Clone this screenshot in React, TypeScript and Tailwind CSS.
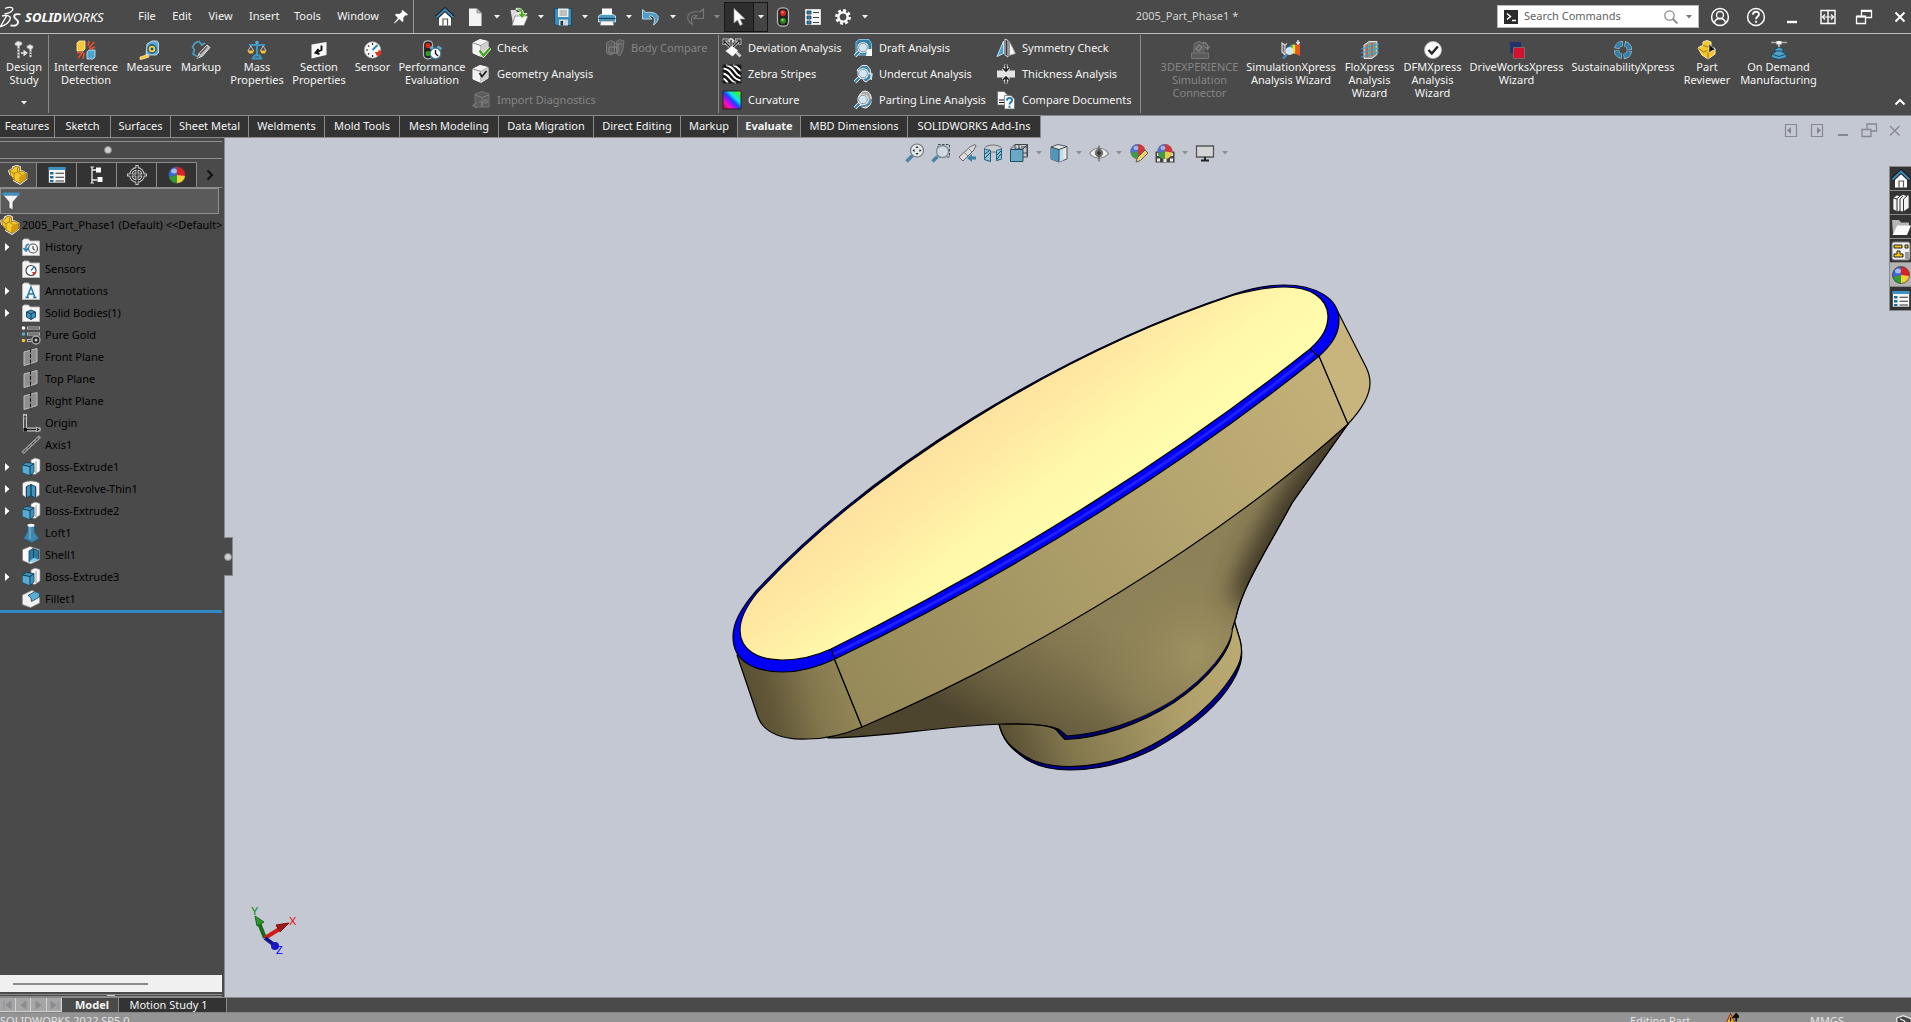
import React from 'react';

interface IconProps {
    children: React.ReactNode;
    className?: string;
}

function Icon({ children, className = 'w-5 h-5' }: IconProps) {
    return (
        <svg viewBox="0 0 20 20" className={`${className} shrink-0`} fill="none" aria-hidden="true">
            {children}
        </svg>
    );
}

function Caret({ className = 'text-[#f0f0f0]' }: { className?: string }) {
    return (
        <svg viewBox="0 0 6 4" className={`w-[6px] h-1 shrink-0 ${className}`} aria-hidden="true">
            <path d="M0 0h6L3 3.5z" fill="currentColor" />
        </svg>
    );
}

/* ---------- shared drawings ---------- */

const goldPart = (
    <Icon>
        <path d="M1 6l4-2.500V2l4-1.500L12 2v5l2-1 4.500 2.500V14L12 19l-6-3.500V13l-4-4z" fill="#f3c623" stroke="#fff" strokeWidth="1.600" />
        <path d="M1.500 5.500L5 4l1-2 3-1 2.500 1.500V7L14 6l4.500 2.500V14L12 18.500 6 15l-3.500-5z" fill="#f6c829" stroke="#8a6410" strokeWidth=".8" />
        <path d="M2 6l4 2.500V15M6 8.500L9.500 7V3l2-1M9.500 7l4.500 3.500L18 9M12 18.500v-7" stroke="#8a6410" strokeWidth=".7" />
        <path d="M12 12l6-3v5l-6 4z" fill="#d69a12" />
    </Icon>
);

const house = (
    <Icon>
        <path d="M4 9v9.500h12V9l-6-6z" fill="#fff" />
        <path d="M8 18.500V12h4.500v6.500" stroke="#555" strokeWidth="1.200" />
        <path d="M1.500 10.500L10 2.500l8.500 8" stroke="#111" strokeWidth="3.800" />
        <path d="M1.500 10.500L10 2.500l8.500 8" stroke="#3d87b5" strokeWidth="2.200" />
    </Icon>
);

const ball = (
    <Icon>
        <circle cx="10" cy="10" r="8.500" fill="#d22" />
        <path d="M10 1.500a8.500 8.500 0 0 0-8.200 10.800L10 10z" fill="#3568d8" />
        <path d="M1.800 12.300A8.500 8.500 0 0 0 10 18.500V10z" fill="#2f9c3a" />
        <path d="M10 18.500a8.500 8.500 0 0 0 8.400-7.500L10 10z" fill="#f1d23a" />
        <ellipse cx="7" cy="6" rx="3" ry="2.500" fill="#fff" opacity=".55" />
        <circle cx="10" cy="10" r="8.500" stroke="#333" strokeWidth=".6" />
    </Icon>
);

const listSheet = (
    <Icon>
        <path d="M2.500 2.500h15v15h-15z" fill="#f4f4f4" stroke="#ddd" />
        <path d="M4 4h4v3H4zM4 9h4v3H4zM4 14h4v3H4z" fill="#2f86ae" stroke="#153d52" strokeWidth=".8" />
        <path d="M10 5.500h6M10 10.500h6M10 15.500h6" stroke="#444" strokeWidth="1.200" />
    </Icon>
);

const listPanel = (
    <Icon>
        <path d="M1.500 2.500h17v15.500h-17z" fill="#f6f6f6" stroke="#222" strokeWidth=".6" />
        <path d="M1.500 2h17v3h-17z" fill="#3d92bf" />
        <path d="M3 7h3.500v2.500H3zM3 11h3.500v2.500H3zM3 15h3.500v2H3z" fill="#1f6f96" />
        <path d="M8.500 8.300H17M8.500 12.300H17M8.500 16H17" stroke="#333" strokeWidth="1.100" />
    </Icon>
);

const whiteCube = (
    <>
        <path d="M2 5l7-3.500 8 2V14l-7 4.500L2 15z" fill="#f2f2f2" stroke="#fff" strokeWidth="1" />
        <path d="M2 5l8 2.500 7-4M10 7.500v11" stroke="#777" strokeWidth=".9" />
        <path d="M10 7.500l7-4V14l-7 4.500z" fill="#cfcfcf" />
    </>
);

const lens = (
    <>
        <path d="M2 18l5-5" stroke="#fff" strokeWidth="3.500" />
        <path d="M2 18l5-5" stroke="#2c7ba6" strokeWidth="2" />
        <circle cx="10" cy="9.500" r="4.500" fill="#cfe6f3" stroke="#f5f5f5" strokeWidth="2.200" />
        <circle cx="10" cy="9.500" r="4.300" stroke="#56707f" strokeWidth=".8" />
    </>
);

/* ---------- title bar ---------- */

function Logo() {
    return (
        <div className="flex items-center gap-[3px] w-[112px] shrink-0 text-white">
            <svg viewBox="0 0 22 22" className="w-[22px] h-[22px] shrink-0" fill="none" stroke="#fff" aria-hidden="true">
                <path d="M5 2.500C9 .5 14 1 12.500 4 11.500 6 8 7.500 4.500 8" strokeWidth="1.300" />
                <path d="M2 10c5-1.200 9.500-.5 8 3.500-1.300 3.500-5 5.800-9.500 7L6.500 10" strokeWidth="1.300" />
                <path d="M20.500 8.500c-3.500-1-7-.2-6.200 2.500.7 2.300 4.400 3 3.700 5.700-.6 2.300-4 3.300-7.500 2.800" strokeWidth="1.800" />
            </svg>
            <span className="text-[13px] leading-4 italic"><b>SOLID</b>WORKS</span>
        </div>
    );
}

const MENUS = [
    { label: 'File', width: 'w-[18px]' },
    { label: 'Edit', width: 'w-5' },
    { label: 'View', width: 'w-[25px]' },
    { label: 'Insert', width: 'w-[29px]' },
    { label: 'Tools', width: 'w-[26px]' },
    { label: 'Window', width: 'w-[44px]' },
];

const QUICK = [
    {
        label: 'New',
        icon: (
            <Icon>
                <path d="M4 1.500h8l4.500 4.500v13H4z" fill="#f3f3f3" />
                <path d="M12 1.500V6h4.500z" fill="#bdbdbd" stroke="#777" strokeWidth=".6" />
            </Icon>
        ),
    },
    {
        label: 'Open',
        icon: (
            <Icon>
                <path d="M1.500 3h5l1.500 2h6v12h-10z" fill="#ddd" />
                <path d="M3 18.500L6 9h13l-4 9.500z" fill="#f7f7f7" stroke="#777" strokeWidth=".7" />
                <path d="M7 1.500c5-1 7.500 1.500 7.500 5H18l-5 5-4.500-5h3C11.500 4 10 2.500 7 2.500z" fill="#4fae1c" stroke="#fff" strokeWidth=".8" />
            </Icon>
        ),
    },
    {
        label: 'Save',
        icon: (
            <Icon>
                <path d="M1.500 1.500h17v17h-15l-2-2z" fill="#3a8dbb" stroke="#173f55" strokeWidth=".8" />
                <path d="M5 1.500h10.500V10H5z" fill="#eee" />
                <path d="M6.500 4H14M6.500 6H14M6.500 8H14" stroke="#777" strokeWidth=".8" />
                <path d="M6 12.500h9v6H6z" fill="#cfd6da" />
                <path d="M7.500 14h2.500v4.500H7.500z" fill="#234" />
            </Icon>
        ),
    },
    {
        label: 'Print',
        icon: (
            <Icon>
                <path d="M5 1.500h10v7H5z" fill="#fff" />
                <path d="M1.500 9L4 7.500h12L18.500 9v6h-17z" fill="#4d9cc6" stroke="#e6f2f9" strokeWidth=".8" />
                <path d="M1.500 11.500h17" stroke="#163f55" strokeWidth="1.200" />
                <path d="M4 14h12l1 4.500H3z" fill="#f7f7f7" stroke="#666" strokeWidth=".6" />
            </Icon>
        ),
    },
    {
        label: 'Undo',
        icon: (
            <Icon>
                <path d="M1.500 2.500v9.500h9.500L8 9c4.500-1 7 2 4.500 9C20 13 19.500 4 5 5.500z" fill="#4e9cc5" stroke="#b9d7e6" strokeWidth="1" />
            </Icon>
        ),
    },
    {
        label: 'Redo',
        disabled: true,
        icon: (
            <Icon>
                <path d="M18.500 2v9.500H9L12 8.500c-4.500-1-7 2-4.500 9C0 12.500.5 3.500 15 5z" stroke="#777" strokeWidth="1.100" />
            </Icon>
        ),
    },
];

function TitleBar() {
    return (
        <header className="flex items-center h-[33px] shrink-0">
            <Logo />
            <nav className="flex items-center gap-4 pl-[26px] text-[11px]" aria-label="Menu">
                {MENUS.map(m => (
                    <button key={m.label} className={`${m.width} whitespace-nowrap`}>{m.label}</button>
                ))}
            </nav>
            <button className="ml-[14px]" aria-label="Pin menu">
                <svg viewBox="0 0 14 14" className="w-[14px] h-[14px]" aria-hidden="true">
                    <path d="M8.500 0L14 4.500l-1 1-1.500-.3-2.300 2.600.3 3.200-1.200 1L5.300 9 .5 13.500 0 13l4-5L1 5l1-1.200 3.300.2L8 2 7.600.8z" fill="#fff" />
                </svg>
            </button>
            <div className="w-px h-[33px] ml-[5px] mr-[21px] bg-[#9a9a9a]" />
            <button className="mr-[10px]" aria-label="Home">{house}</button>
            {QUICK.map(q => (
                <div key={q.label} className="flex items-center">
                    <button aria-label={q.label} disabled={q.disabled}>{q.icon}</button>
                    <button aria-label={`${q.label} options`} className="flex justify-center w-6">
                        <Caret className={q.disabled ? 'text-[#8a8a8a]' : 'text-[#f0f0f0]'} />
                    </button>
                </div>
            ))}
            <div className="flex h-[30px] -ml-[5px] mr-[5px] border border-[#161616] bg-[#2e2e2e]">
                <button aria-label="Select" className="flex items-center justify-center w-[29px] border-r border-[#161616]">
                    <Icon>
                        <path d="M5 1.500v14.500l3.500-3 2.500 5.500 2.500-1.200L11 12h5z" fill="#fff" stroke="#999" strokeWidth=".7" />
                    </Icon>
                </button>
                <button aria-label="Select options" className="flex items-center justify-center w-[13px] bg-[#444]"><Caret /></button>
            </div>
            <button className="mr-[10px]" aria-label="Rebuild">
                <Icon>
                    <rect x="4.500" y=".8" width="11" height="18.400" rx="4.500" fill="#222" stroke="#b9b9b9" strokeWidth="1.300" />
                    <circle cx="10" cy="6" r="3" fill="#d8281c" />
                    <circle cx="9.500" cy="5.200" r="1" fill="#ff9d8c" />
                    <circle cx="10" cy="13.800" r="3" fill="#2f8a1d" />
                    <circle cx="9.500" cy="13" r="1" fill="#9be07f" />
                </Icon>
            </button>
            <button className="mr-[10px]" aria-label="File properties">{listSheet}</button>
            <button aria-label="Options">
                <Icon>
                    <circle cx="10" cy="10" r="6.600" stroke="#fff" strokeWidth="2.600" strokeDasharray="2.900 2.280" />
                    <circle cx="10" cy="10" r="4.600" stroke="#fff" strokeWidth="2.400" />
                </Icon>
            </button>
            <button aria-label="Options menu" className="flex justify-center w-6"><Caret /></button>

            <h1 className="flex-1 text-center text-[11px] text-[#d4d4d4] whitespace-nowrap">2005_Part_Phase1 *</h1>

            <label className="flex items-center w-[202px] h-[23px] px-1.5 bg-white border border-[#bbb]">
                <svg viewBox="0 0 14 14" className="w-[14px] h-[14px] shrink-0" aria-hidden="true">
                    <path d="M0 0h14v14H0z" fill="#2a2a2a" />
                    <path d="M3 3.500L6.500 6.500 3 9.500M8 10.500h4" stroke="#fff" strokeWidth="1.500" fill="none" />
                </svg>
                <input
                    type="text"
                    aria-label="Search Commands"
                    placeholder="Search Commands"
                    className="flex-1 min-w-0 ml-[6px] text-[11px] text-[#333] outline-none placeholder:text-[#5f5f5f]"
                />
                <svg viewBox="0 0 14 14" className="w-[14px] h-[14px] shrink-0 mr-2" fill="none" stroke="#888" aria-hidden="true">
                    <circle cx="5.500" cy="5.500" r="4.700" strokeWidth="1.200" />
                    <path d="M9 9l4.500 4.500" strokeWidth="1.800" />
                </svg>
                <Caret className="text-[#777]" />
            </label>
            <div className="flex items-center gap-4 ml-[11px] pr-[1px]">
                <button aria-label="Account">
                    <Icon>
                        <circle cx="10" cy="10" r="8.400" stroke="#fff" strokeWidth="1.500" />
                        <circle cx="10" cy="8" r="3.500" stroke="#fff" strokeWidth="1.300" />
                        <path d="M4.500 16c.5-3.500 3-4.500 5.500-4.500s5 1 5.500 4.500" stroke="#fff" strokeWidth="1.300" />
                    </Icon>
                </button>
                <button aria-label="Help">
                    <Icon>
                        <circle cx="10" cy="10" r="8.400" stroke="#fff" strokeWidth="1.500" />
                        <path d="M7 7.800c0-4 6-4 6-.5 0 2.300-3 2.200-3 5M10 13.800v2" stroke="#fff" strokeWidth="1.800" />
                    </Icon>
                </button>
                <button aria-label="Minimize"><Icon><path d="M5 15h10" stroke="#fff" strokeWidth="2.400" /></Icon></button>
                <button aria-label="Span displays">
                    <Icon>
                        <path d="M3 3.500h14v13H3zM10 3.500v13" stroke="#fff" strokeWidth="1.400" />
                        <path d="M4.500 10h11M7 7.500L4.500 10 7 12.500M13 7.500l2.500 2.500-2.500 2.500" stroke="#fff" strokeWidth="1.200" />
                    </Icon>
                </button>
                <button aria-label="Restore">
                    <Icon><path d="M2.500 9.500h9v7h-9zM7.500 9V3.500h10v7h-5.500" stroke="#fff" strokeWidth="1.300" /><path d="M2.500 9.500h9M7.500 4h10" stroke="#fff" strokeWidth="2" /></Icon>
                </button>
                <button aria-label="Close"><Icon><path d="M5.500 5.500l9 9M14.500 5.500l-9 9" stroke="#fff" strokeWidth="1.900" /></Icon></button>
            </div>
        </header>
    );
}

/* ---------- ribbon ---------- */

interface BigTool {
    lines: string[];
    width: string;
    disabled?: boolean;
    icon: React.ReactNode;
}

const ANALYSIS: BigTool[] = [
    {
        lines: ['Interference', 'Detection'],
        width: 'w-[62px]',
        icon: (
            <Icon>
                <path d="M1 3l2-2h6v8l-2 2H1z" fill="#f5c93a" stroke="#fff0b0" strokeWidth=".8" />
                <path d="M11 12l2-2h6v7l-2 2h-6z" fill="#4ba3cf" stroke="#cfe8f4" strokeWidth=".8" />
                <path d="M12 6l1-5M13 8l5-6M14 9l5-2M8 13l-1 6M7 12l-5 6M6 12l-5 1" stroke="#f0502c" strokeWidth="1.500" />
            </Icon>
        ),
    },
    {
        lines: ['Measure'],
        width: 'w-11',
        icon: (
            <Icon>
                <path d="M8 4l5-3h5l1.500 2v10L17 15H7z" fill="#58a9d1" stroke="#e0eef5" strokeWidth=".8" />
                <circle cx="13" cy="9" r="4" fill="#f4d04a" stroke="#17506c" strokeWidth="1.300" />
                <circle cx="13" cy="9" r="1.400" fill="#17506c" />
                <path d="M1 17l8-2.500 1 2.500-6 2-3 .5z" fill="#f4c835" stroke="#fff2b5" strokeWidth=".7" />
            </Icon>
        ),
    },
    {
        lines: ['Markup'],
        width: 'w-10',
        icon: (
            <Icon>
                <path d="M14 3L11 5 8 1.500 4 3 1.500 7 3.500 10 2 14l4 2.500" stroke="#4c9dc4" strokeWidth="1.700" />
                <path d="M6 18.500l2-5L16 5l3 2.500-7.500 8.500z" fill="#b8b8b8" stroke="#eee" strokeWidth=".9" />
                <path d="M9 14l7-7.500M6 18.500l2.500-3" stroke="#555" strokeWidth="1.100" />
            </Icon>
        ),
    },
    {
        lines: ['Mass', 'Properties'],
        width: 'w-[52px]',
        icon: (
            <Icon>
                <path d="M10 1.500V15M6 18.500l1.500-3h5l1.500 3zM2 5h16" stroke="#3e96c2" strokeWidth="2.200" />
                <path d="M.8 11l3-5 3 5M13.200 11l3-5 3 5" stroke="#d0d0d0" strokeWidth=".9" />
                <path d="M.5 10.500h6.500l-1.500 3h-3.500zM13 10.500h6.500l-1.500 3h-3.500z" fill="#f2bf35" />
                <circle cx="10" cy="2.500" r="1.800" fill="#55abd5" />
            </Icon>
        ),
    },
    {
        lines: ['Section', 'Properties'],
        width: 'w-[52px]',
        icon: (
            <Icon>
                <path d="M2.500 4.500L17.500 2v13L2.500 18.500z" fill="#f7f7f7" />
                <path d="M12.500 5.500V10L7 12.500M9.500 9L6.500 12.700l4 1.300" stroke="#111" strokeWidth="1.900" />
            </Icon>
        ),
    },
    {
        lines: ['Sensor'],
        width: 'w-[35px]',
        icon: (
            <Icon>
                <circle cx="9.500" cy="10" r="8.300" fill="#fafafa" stroke="#999" strokeWidth=".7" />
                <path d="M9.500 3v2M3 10h2M5 5.500l1.200 1.200M5 14.500l1.200-1.200M9.500 17v-2M14 5.500L13 6.700" stroke="#222" strokeWidth="1.200" />
                <path d="M9.500 10l5-5" stroke="#2c86b2" strokeWidth="1.900" />
                <path d="M12 12h3l1-2.500 2.500 2.500-2 4.500-3-1z" fill="#e03522" />
            </Icon>
        ),
    },
    {
        lines: ['Performance', 'Evaluation'],
        width: 'w-16',
        icon: (
            <Icon>
                <rect x="1.500" y=".8" width="9" height="18" rx="4" fill="#222" stroke="#b9b9b9" strokeWidth="1.200" />
                <circle cx="6" cy="5.500" r="2.600" fill="#d8281c" />
                <circle cx="6" cy="13.500" r="2.600" fill="#2f9a1d" />
                <path d="M8 8.500l3-2M19.500 9l-4-2.500" stroke="#64b1d6" strokeWidth="2.400" />
                <circle cx="13.500" cy="13.500" r="5.300" fill="#fff" stroke="#3d7f9f" strokeWidth="1.200" />
                <path d="M13.500 10v3.500l2.500 2.500" stroke="#111" strokeWidth="1.400" />
            </Icon>
        ),
    },
];

const XPRESS: BigTool[] = [
    {
        lines: ['3DEXPERIENCE', 'Simulation', 'Connector'],
        width: 'w-[75px]',
        disabled: true,
        icon: (
            <Icon>
                <path d="M1.500 13h17v5.500h-17zM4 13V4l5-2.500 5 2V13" fill="#5b5b5b" stroke="#777" />
                <path d="M6 9l3-4 3 2-3 4zM13 2.500c4 0 5 3 4.500 6M15 6.500l2.500 3L19.500 6" stroke="#808080" strokeWidth="1.300" />
            </Icon>
        ),
    },
    {
        lines: ['SimulationXpress', 'Analysis Wizard'],
        width: 'w-[88px]',
        icon: (
            <Icon>
                <path d="M1 3l3 2v10l-3-3zM3.500 5.500l2.500-2" fill="#777" stroke="#ddd" strokeWidth="1.100" />
                <path d="M5 8C8 6 9 4 12 4.500s5 .5 7-.5v12c-2-2-4-2.500-6-2.500s-5 1-8 1z" fill="#2a58e0" />
                <path d="M9 5.500L11.500 4.500v9L9 14z" fill="#20c04a" />
                <path d="M11.500 4.500l3 .3v9l-3-.3z" fill="#f4e31f" />
                <path d="M14.500 4.800L19 4v12l-4.500-2.200z" fill="#ee5a1c" />
                <path d="M17 0v4M15.500 2L17 4l1.800-2" stroke="#eee" strokeWidth="1.300" />
                <circle cx="8.500" cy="11" r="3.500" fill="#cfe6f3" stroke="#eee" strokeWidth="1" />
                <path d="M2 18.500l4-4" stroke="#3c92bf" strokeWidth="2.200" />
            </Icon>
        ),
    },
    {
        lines: ['FloXpress', 'Analysis', 'Wizard'],
        width: 'w-[49px]',
        icon: (
            <Icon>
                <path d="M4 5l5-3.500h8v13l-5 4H4z" fill="#9b9b9b" stroke="#eee" strokeWidth=".9" />
                <path d="M7 5v12M12 3v13" stroke="#d84a3a" strokeWidth="1.600" />
                <path d="M9.500 4v13M14.500 3v12" stroke="#45b56a" strokeWidth="1.400" />
                <path d="M1 9l18-5M1 13l18-5M1 17l18-5" stroke="#3a9bd0" strokeWidth="1.100" />
            </Icon>
        ),
    },
    {
        lines: ['DFMXpress', 'Analysis', 'Wizard'],
        width: 'w-[57px]',
        icon: (
            <Icon>
                <circle cx="10" cy="10" r="8.500" fill="#fafafa" stroke="#bbb" strokeWidth=".8" />
                <path d="M5.500 10l3.300 3.500 6-7" stroke="#222" strokeWidth="2.400" />
            </Icon>
        ),
    },
    {
        lines: ['DriveWorksXpress', 'Wizard'],
        width: 'w-[91px]',
        icon: (
            <Icon>
                <path d="M3 2h11v11H3z" fill="#22306c" />
                <path d="M6.500 7.500h11v11h-11z" fill="#d3122e" stroke="#777" strokeWidth=".8" />
            </Icon>
        ),
    },
    {
        lines: ['SustainabilityXpress'],
        width: 'w-[102px]',
        icon: (
            <Icon>
                <circle cx="10" cy="10" r="6.500" stroke="#9dbccb" strokeWidth="5.400" strokeDasharray="8.400 1.810" strokeDashoffset="-.9" />
                <circle cx="10" cy="10" r="6.500" stroke="#2f7fa6" strokeWidth="4" strokeDasharray="7 3.210" strokeDashoffset="-1.600" />
            </Icon>
        ),
    },
    {
        lines: ['Part', 'Reviewer'],
        width: 'w-[46px]',
        icon: (
            <Icon>
                <path d="M1 8l5-3V2l4-1.500L14 2v5l4 1.500V14l-7 5-6-4z" fill="#f5c62b" stroke="#fff0b5" strokeWidth="1" />
                <path d="M1.500 8.500l5 3.500 4-1.500M6 5l4 2 4-2M11 12v7" stroke="#8a6410" strokeWidth=".8" />
                <path d="M12 4v9l2.300-2 4-1.500z" fill="#111" stroke="#ddd" strokeWidth=".7" />
            </Icon>
        ),
    },
    {
        lines: ['On Demand', 'Manufacturing'],
        width: 'w-[77px]',
        icon: (
            <Icon>
                <path d="M2 2.500h16" stroke="#aaa" strokeWidth="1.500" />
                <path d="M7.500 1h5v3.500h-5z" fill="#f4f4f4" />
                <path d="M10 4.500V8" stroke="#ddd" strokeWidth="1.500" />
                <path d="M2.500 14l4-2-1-2.500 4.500-2.300L14.500 9l-1 3 4 2v3.500L10 19.500l-7.500-2z" fill="#4ca2cb" stroke="#173f55" strokeWidth=".8" />
                <path d="M2.500 14l7.500 2.500 7.500-2.500M6 11h7.500" stroke="#173f55" strokeWidth=".9" />
            </Icon>
        ),
    },
];

interface SmallTool {
    label: string;
    disabled?: boolean;
    icon: React.ReactNode;
}

const CHECKS: SmallTool[] = [
    {
        label: 'Check',
        icon: <Icon>{whiteCube}<path d="M8.500 12.500l4 5L19 10" stroke="#fff" strokeWidth="3.600" /><path d="M8.500 12.500l4 5L19 10" stroke="#3da516" strokeWidth="2.300" /></Icon>,
    },
    {
        label: 'Geometry Analysis',
        icon: <Icon>{whiteCube}<path d="M8.500 9l2.500 3.500 4.500-5.500" stroke="#222" strokeWidth="1.900" /></Icon>,
    },
    {
        label: 'Import Diagnostics',
        disabled: true,
        icon: (
            <Icon>
                <path d="M4 4l7-2.500 7 2.500v13H4z" fill="#5c5c5c" stroke="#757575" />
                <path d="M4 5l7 2.500L18 5M11 8v9M8 12h3v4M13 10h3v3h-3zM6 13l-4.500 2.500L6 18" stroke="#808080" />
            </Icon>
        ),
    },
];

const BODY_COMPARE: SmallTool[] = [
    {
        label: 'Body Compare',
        disabled: true,
        icon: (
            <Icon>
                <path d="M1.500 5l4-2.500 4 1.500v11l-4 2-4-2zM11 4l4-2.500 4 1.500-1 8-3 7-3-2z" fill="#5c5c5c" stroke="#777" />
                <path d="M4 9h8v6H4zM11 6h6M13 6v8" stroke="#858585" />
            </Icon>
        ),
    },
];

const SURFACE: SmallTool[] = [
    {
        label: 'Deviation Analysis',
        icon: (
            <Icon>
                <path d="M9 10L2 3M2 7V2h5M9 8V2M7 4l2-3 3 3M10 10l7-7M13 2h5v5M14 14l4.500 4.500" stroke="#d0d0d0" strokeWidth="2.800" />
                <path d="M9 10L2 3M2 6.500V2h4.500M9 8V2M10 10l7-7M13.500 2H18v4.500" stroke="#222" strokeWidth="1.200" />
                <path d="M3.500 13l6.500-5 6 4.500-5.500 6z" fill="#fafafa" />
            </Icon>
        ),
    },
    {
        label: 'Zebra Stripes',
        icon: (
            <Icon>
                <path d="M1 1h18v18H1z" fill="#111" />
                <path d="M1 4.500c5 .5 6.500 2.500 9 6s4.500 5.500 9 6M4 1c5 1.500 7 3 9 6.500s3 4 6 5M1 9.500c3.500.5 5 2.500 7 5s3 3.500 6 4.500M11 1c4 1.500 6 4 8 6M1 14.500c2 .5 3.500 2.500 5 4.500" stroke="#fff" strokeWidth="1.900" />
                <path d="M1 1h18v18H1z" stroke="#222" strokeWidth="1" />
            </Icon>
        ),
    },
    {
        label: 'Curvature',
        icon: (
            <Icon>
                <defs>
                    <linearGradient id="curv" x1="0" y1="1" x2="1" y2="0">
                        <stop offset="0" stopColor="#a01010" />
                        <stop offset=".22" stopColor="#ff10b0" />
                        <stop offset=".38" stopColor="#a010ff" />
                        <stop offset=".5" stopColor="#1048ff" />
                        <stop offset=".65" stopColor="#10e8f0" />
                        <stop offset=".85" stopColor="#30f040" />
                        <stop offset="1" stopColor="#e8f010" />
                    </linearGradient>
                </defs>
                <path d="M1 1h18v18H1z" fill="url(#curv)" stroke="#222" />
            </Icon>
        ),
    },
];

const DRAFT: SmallTool[] = [
    {
        label: 'Draft Analysis',
        icon: <Icon><path d="M3 4l3-2.500h10l2.500 4V17H3z" fill="#2f7fa6" stroke="#86bcd6" /><path d="M14 11h5v7h-6z" fill="#fff" />{lens}</Icon>,
    },
    {
        label: 'Undercut Analysis',
        icon: <Icon><path d="M4 6l5-4.500h5L17 5l1 5v4l-5 4-2-1z" fill="#3a86ad" stroke="#e8e8e8" /><path d="M15 9l4 1-1 6" stroke="#d0e4ee" strokeWidth="1.500" />{lens}</Icon>,
    },
    {
        label: 'Parting Line Analysis',
        icon: <Icon><ellipse cx="12" cy="9.500" rx="6.500" ry="8.500" fill="#a9a9a9" stroke="#f2f2f2" /><path d="M8 17l8-3 3-5" stroke="#3a8db8" strokeWidth="1.600" />{lens}</Icon>,
    },
];

const COMPARE: SmallTool[] = [
    {
        label: 'Symmetry Check',
        icon: (
            <Icon>
                <path d="M1 18.500L7.500 3v12.500z" fill="#4ba1cb" stroke="#bfe0ef" strokeWidth="1" />
                <path d="M9 1l3 1.500V19l-3-2z" fill="#3a3a3a" stroke="#ddd" />
                <path d="M13.500 3.500L19.500 15.500l-6 2z" fill="#f4f4f4" stroke="#999" strokeWidth=".7" />
            </Icon>
        ),
    },
    {
        label: 'Thickness Analysis',
        icon: (
            <Icon>
                <path d="M1 6.500h18v7H1z" fill="#e4e4e4" />
                <path d="M10 .5v6M7 4l3 3 3-3M10 19.500v-6M7 16l3-3 3 3" stroke="#eee" strokeWidth="3.200" />
                <path d="M10 .5v6M7 4l3 3 3-3M10 19.500v-6M7 16l3-3 3 3" stroke="#222" strokeWidth="1.600" />
            </Icon>
        ),
    },
    {
        label: 'Compare Documents',
        icon: (
            <Icon>
                <path d="M1.500 1.500H8l3.500 3.500v10h-10z" fill="#fafafa" stroke="#666" strokeWidth=".7" />
                <path d="M8.500 5.500H15l3.500 3.500v10h-10z" fill="#fafafa" stroke="#666" strokeWidth=".7" />
                <path d="M3 10h5M3 12.500h5" stroke="#111" strokeWidth="1.200" />
                <path d="M11 10.500c0-3.500 5-3.300 5-.3 0 2-2.500 2-2.500 4.300M13.500 15.700v2" stroke="#1c76ab" strokeWidth="1.900" />
            </Icon>
        ),
    },
];

function BigButton({ tool }: { tool: BigTool }) {
    return (
        <button
            disabled={tool.disabled}
            className={`${tool.width} flex flex-col items-center pt-[6px] text-[11px] leading-[13px] whitespace-nowrap ${tool.disabled ? 'text-[#868686]' : ''}`}
        >
            {tool.icon}
            {tool.lines.map(l => <span key={l}>{l}</span>)}
        </button>
    );
}

function SmallColumn({ tools, className }: { tools: SmallTool[]; className: string }) {
    return (
        <div className={`${className} flex flex-col shrink-0 pt-[1px]`}>
            {tools.map(t => (
                <button
                    key={t.label}
                    disabled={t.disabled}
                    className={`flex items-center gap-[6px] h-[26px] text-[11px] whitespace-nowrap ${t.disabled ? 'text-[#868686]' : ''}`}
                >
                    {t.icon}
                    {t.label}
                </button>
            ))}
        </div>
    );
}

const ribbonRule = <div className="w-px h-[78px] mt-[1px] bg-[#8a8a8a] shrink-0" />;

function Ribbon() {
    return (
        <div className="flex items-start h-[82px] shrink-0 border-t border-[#b9beb9]">
            <div className="flex flex-col items-center w-12 pt-[6px] shrink-0">
                <button className="flex flex-col items-center text-[11px] leading-[13px]">
                    <Icon>
                        <path d="M1 3l3-2 4 1.500v2L5.500 6v12H3.500V6L1 5zM13 6l3-1.500L19 6v2l-1.500 1v8h-2V9L13 8z" fill="#e6e6e6" stroke="#999" strokeWidth=".6" />
                        <path d="M3.500 9h2M3.500 12h2M3.500 15h2M15.500 12h2M15.500 14.500h2" stroke="#444" strokeWidth="1" />
                        <path d="M7 13h4M9.500 10.500l3 2.500-3 2.500" stroke="#eee" strokeWidth="1.600" />
                    </Icon>
                    <span>Design</span>
                    <span>Study</span>
                </button>
                <button className="mt-[15px]" aria-label="Design Study options"><Caret /></button>
            </div>
            {ribbonRule}
            <div className="flex items-start gap-[10px] pl-[6px]">
                {ANALYSIS.map(t => <BigButton key={t.lines[0]} tool={t} />)}
            </div>
            <SmallColumn tools={CHECKS} className="w-[134px] ml-[7px]" />
            <SmallColumn tools={BODY_COMPARE} className="w-[113px]" />
            {ribbonRule}
            <SmallColumn tools={SURFACE} className="w-[131px] ml-[3px]" />
            <SmallColumn tools={DRAFT} className="w-[143px]" />
            <SmallColumn tools={COMPARE} className="w-[144px]" />
            {ribbonRule}
            <div className="flex items-start gap-[10px] pl-[21px]">
                {XPRESS.map(t => <BigButton key={t.lines[0]} tool={t} />)}
            </div>
            <button className="self-end ml-auto mr-[5px] mb-[9px]" aria-label="Collapse ribbon">
                <svg viewBox="0 0 12 8" className="w-3 h-2" fill="none" aria-hidden="true">
                    <path d="M1.500 6.500L6 2l4.500 4.500" stroke="#fff" strokeWidth="2" />
                </svg>
            </button>
        </div>
    );
}

/* ---------- command tabs ---------- */

const TABS = [
    { label: 'Features', width: 'w-[55px]' },
    { label: 'Sketch', width: 'w-[56px]' },
    { label: 'Surfaces', width: 'w-[60px]' },
    { label: 'Sheet Metal', width: 'w-[78px]' },
    { label: 'Weldments', width: 'w-[76px]' },
    { label: 'Mold Tools', width: 'w-[75px]' },
    { label: 'Mesh Modeling', width: 'w-[99px]' },
    { label: 'Data Migration', width: 'w-[95px]' },
    { label: 'Direct Editing', width: 'w-[87px]' },
    { label: 'Markup', width: 'w-[57px]' },
    { label: 'Evaluate', width: 'w-[63px]' },
    { label: 'MBD Dimensions', width: 'w-[107px]' },
    { label: 'SOLIDWORKS Add-Ins', width: 'w-[133px]' },
];

function CommandTabs() {
    return (
        <div className="flex justify-between h-[23px] shrink-0 bg-[#c4c8d3] border-t border-[#8a8a8a]">
            <div className="flex h-[22px] border-b border-[#8a8a8a]" role="tablist">
                {TABS.map(t => (
                    <button
                        key={t.label}
                        role="tab"
                        aria-selected={t.label === 'Evaluate'}
                        className={`${t.width} flex items-center justify-center border-r border-[#8a8a8a] text-[11px] whitespace-nowrap ${
                            t.label === 'Evaluate' ? 'bg-[#4a4a4a] font-bold' : 'bg-[#333]'
                        }`}
                    >
                        {t.label}
                    </button>
                ))}
            </div>
            <div className="flex items-end gap-[6px] pr-[6px] -mb-[2px]">
                <button aria-label="Previous pane"><Icon><path d="M4.500 4.500h11v12h-11z" stroke="#85888f" strokeWidth="1.200" /><path d="M10 7v7l-4-3.500z" fill="#85888f" /></Icon></button>
                <button aria-label="Next pane"><Icon><path d="M4.500 4.500h11v12h-11z" stroke="#85888f" strokeWidth="1.200" /><path d="M10 7v7l4-3.500z" fill="#85888f" /></Icon></button>
                <button aria-label="Minimize document"><Icon><path d="M5 15h10" stroke="#85888f" strokeWidth="2" /></Icon></button>
                <button aria-label="Restore document"><Icon><path d="M3 9.500h9v7H3zM8 9V4h9.500v7H12" stroke="#85888f" strokeWidth="1.300" /></Icon></button>
                <button aria-label="Close document"><Icon><path d="M5 6l9.500 9.500M14.500 6L5 15.500" stroke="#85888f" strokeWidth="1.300" /></Icon></button>
            </div>
        </div>
    );
}

/* ---------- feature manager ---------- */

const folder = (
    <path d="M1.500 18.500V3.500L3 2h4.500L9 4h9.500v14.500z" fill="#f4f4f4" stroke="#bbb" strokeWidth=".9" />
);

const plane = (
    <Icon>
        <path d="M3 5l13-3.500v13L3 18.500z" fill="#8e8e8e" stroke="#bdbdbd" strokeWidth="1" />
        <path d="M9.500 1.500v17" stroke="#1c1c1c" strokeWidth="1.100" strokeDasharray="4 1.500" />
    </Icon>
);

const extrude = (
    <Icon>
        <path d="M10 3l4-2 5 1.500V14l-5 3.500-4-1z" fill="#fafafa" stroke="#888" strokeWidth=".7" />
        <path d="M15 4v12" stroke="#999" />
        <path d="M1.500 8L5 5.500l8 1V15l-4 3.500-7.500-3z" fill="#3f93bd" stroke="#0f3a50" strokeWidth=".8" />
        <path d="M1.500 8L9 9.500v9l-7.500-3z" fill="#63b4da" opacity=".7" />
        <path d="M1.500 8L9 9.500l4-3M9 9.500v9" stroke="#0f3a50" strokeWidth="1" />
    </Icon>
);

interface TreeItem {
    label: string;
    expandable?: boolean;
    icon: React.ReactNode;
}

const TREE: TreeItem[] = [
    {
        label: 'History',
        expandable: true,
        icon: <Icon>{folder}<circle cx="12" cy="11.500" r="4.500" stroke="#555" strokeWidth="1.200" /><path d="M12 9v3l2 1" stroke="#333" /><path d="M8 7c-3 .5-3.500 3-3 6M2.500 11l2.500 3 2.500-3" stroke="#2c86b2" strokeWidth="1.600" /></Icon>,
    },
    {
        label: 'Sensors',
        icon: <Icon>{folder}<circle cx="10" cy="11.500" r="5" fill="#fff" stroke="#444" strokeWidth="1.200" /><path d="M10 11.500l3-3.500" stroke="#2c86b2" strokeWidth="1.500" /><path d="M11 13h4l-2 3.500z" fill="#e03522" /></Icon>,
    },
    {
        label: 'Annotations',
        expandable: true,
        icon: <Icon>{folder}<path d="M6 16.500l4-10.500 4 10.500M7.500 13h5M4.500 16.500h3.500M12 16.500h3.500" stroke="#2478a3" strokeWidth="1.500" /></Icon>,
    },
    {
        label: 'Solid Bodies(1)',
        expandable: true,
        icon: <Icon>{folder}<path d="M5.500 9l4.500-2 4.500 2v5L10 16.500 5.500 14z" fill="#3f93bd" stroke="#0f3a50" strokeWidth=".9" /><path d="M5.500 9l4.500 2 4.500-2M10 11v5.500" stroke="#0f3a50" strokeWidth=".9" /></Icon>,
    },
    {
        label: 'Pure Gold',
        icon: (
            <Icon>
                <circle cx="2.500" cy="3" r="1.800" fill="#fff" /><circle cx="2.500" cy="9" r="1.800" fill="#55abd5" /><circle cx="2.500" cy="15.500" r="1.800" fill="#f2bf35" />
                <path d="M6 3h13M6 9h13M6 15.500h5" stroke="#bbb" strokeWidth="3" />
                <path d="M7 3h11M7 9h11M7 15.500h4" stroke="#333" strokeWidth="1.200" />
                <circle cx="15" cy="15" r="4" fill="#222" stroke="#aaa" strokeWidth="1.400" />
                <circle cx="15" cy="15" r="1.500" fill="#ccc" />
            </Icon>
        ),
    },
    { label: 'Front Plane', icon: plane },
    { label: 'Top Plane', icon: plane },
    { label: 'Right Plane', icon: plane },
    {
        label: 'Origin',
        icon: <Icon><path d="M4 1v15.500h15.500" stroke="#c4c4c4" strokeWidth="4" /><path d="M4 3v13.500h13" stroke="#222" strokeWidth="1.400" /><path d="M2 5l2-4 2 4zM15.500 14l4 2.500-4 2.500z" fill="#222" stroke="#c4c4c4" strokeWidth=".8" /><path d="M2.500 15h3.500v3.500H2.500z" fill="#111" /></Icon>,
    },
    {
        label: 'Axis1',
        icon: <Icon><path d="M1.500 18L19 1.500" stroke="#9a9a9a" strokeWidth="3.200" /><path d="M2.500 17L18 2.500" stroke="#2b2b2b" strokeWidth="1" strokeDasharray="4 1.500" /></Icon>,
    },
    { label: 'Boss-Extrude1', expandable: true, icon: extrude },
    {
        label: 'Cut-Revolve-Thin1',
        expandable: true,
        icon: <Icon><path d="M1.500 4.500C4 1 16 1 18.500 4.500V16L15 18.500V8L10 6 5 8v10.500L1.500 16z" fill="#f4f4f4" stroke="#777" strokeWidth=".7" /><path d="M5.500 7.500L10 5.500v11L5.500 19zM10 5.500l4.500 2V19L10 16.500z" fill="#3f93bd" stroke="#0f3a50" strokeWidth=".8" /></Icon>,
    },
    { label: 'Boss-Extrude2', expandable: true, icon: extrude },
    {
        label: 'Loft1',
        icon: <Icon><path d="M6.500 2h7v7l4.500 6.500L11 19.500 2.500 15.500l4-6.500z" fill="#3f87ac" stroke="#275c78" strokeWidth=".8" /><path d="M9 3v13" stroke="#7db9d6" strokeWidth="2" opacity=".6" /><ellipse cx="10" cy="2.200" rx="3.500" ry="1.500" fill="#fff" /></Icon>,
    },
    {
        label: 'Shell1',
        icon: <Icon><path d="M1.500 4.500L9 1.500l9.500 3V15L9.500 19l-8-3.500z" fill="#fafafa" stroke="#777" strokeWidth=".7" /><path d="M8 6l4-2.500 5.500 2V14L8 17z" fill="#2c7ba3" stroke="#0f3a50" strokeWidth=".8" /><path d="M8 16.500l4.500-3.500 5 1-8 3.500z" fill="#7fd0ee" /><path d="M12.500 4v9" stroke="#0f3a50" strokeWidth=".8" /></Icon>,
    },
    { label: 'Boss-Extrude3', expandable: true, icon: extrude },
    {
        label: 'Fillet1',
        icon: <Icon><path d="M1.500 6L11 1.500l7.500 3V14l-9 4.500-8-3z" fill="#f0f0f0" stroke="#999" strokeWidth=".7" /><path d="M7 6.500L14 2.500l4.500 2V8l-8 4.500c0-3-1-5-3.500-6z" fill="#5aaed6" stroke="#173f55" strokeWidth=".8" /></Icon>,
    },
];

const PANEL_TABS = [
    { label: 'FeatureManager', width: 'w-[37px]', icon: goldPart },
    { label: 'PropertyManager', width: 'w-10', icon: listPanel },
    {
        label: 'ConfigurationManager',
        width: 'w-10',
        icon: <Icon><path d="M5 2v16M5 5h4M5 15h5" stroke="#e8e8e8" strokeWidth="1.300" /><path d="M9 2.500h5v5H9zM10.500 12h5v5h-5z" fill="#fff" /><path d="M3.500 2H7M3.500 18H7" stroke="#e8e8e8" /></Icon>,
    },
    {
        label: 'DimXpertManager',
        width: 'w-10',
        icon: <Icon><circle cx="10" cy="10" r="6.200" stroke="#c8c8c8" strokeWidth="3.400" /><path d="M10 0v20M0 10h20" stroke="#c8c8c8" strokeWidth="3.200" /><circle cx="10" cy="10" r="6.200" stroke="#222" strokeWidth="1.200" /><path d="M10 1v18M1 10h18" stroke="#222" strokeWidth="1.200" /></Icon>,
    },
    { label: 'DisplayManager', width: 'w-10', icon: ball },
];

function FeatureManager() {
    return (
        <aside className="flex flex-col w-[225px] shrink-0 border-r border-[#8a8a8a]">
            <div className="flex flex-col flex-1 min-h-0 w-[222px]">
                <div className="flex items-center justify-center h-[18px] mt-[3px] border-y border-[#8f8f8f] pr-1.5">
                    <span className="w-2 h-2 rounded-full bg-[#cfcfcf] border border-[#888]" />
                </div>
                <div className="flex h-[26px] mt-[3px] border-b border-[#8a8a8a]" role="tablist">
                    {PANEL_TABS.map((t, i) => (
                        <button
                            key={t.label}
                            role="tab"
                            aria-label={t.label}
                            aria-selected={i === 0}
                            className={`${t.width} flex items-center justify-center border-t border-r border-[#8a8a8a] ${i === 0 ? '' : 'bg-[#333]'}`}
                        >
                            {t.icon}
                        </button>
                    ))}
                    <button className="flex items-center justify-center flex-1" aria-label="More tabs">
                        <svg viewBox="0 0 8 12" className="w-2 h-3" fill="none" aria-hidden="true"><path d="M1.500 1.500L6 6l-4.500 4.500" stroke="#111" strokeWidth="2" /></svg>
                    </button>
                </div>
                <label className="flex items-center h-[26px] w-[219px] bg-[#5a5a5a] border border-[#8f8f8f]">
                    <Icon>
                        <path d="M2 4h16l-6 7v8l-4-2v-6z" fill="#f2f2f2" stroke="#444" strokeWidth=".7" />
                        <path d="M1.500 1.500h17v3h-17z" fill="#3d92bf" />
                    </Icon>
                    <input type="text" aria-label="Filter tree" className="flex-1 min-w-0 ml-1 text-[11px] outline-none" />
                </label>
                <div className="text-[11px] text-black overflow-hidden whitespace-nowrap shrink-0">
                    <div className="flex items-center h-[22px]">
                        {goldPart}
                        <span className="ml-[2px]">2005_Part_Phase1 (Default) &lt;&lt;Default&gt;</span>
                    </div>
                    <ul>
                        {TREE.map(item => (
                            <li key={item.label} className="flex items-center h-[22px] pl-[5px]">
                                <span className="w-4">
                                    {item.expandable && (
                                        <svg viewBox="0 0 5 8" className="w-[5px] h-2" aria-hidden="true"><path d="M0 0l4.500 4L0 8z" fill="#fff" /></svg>
                                    )}
                                </span>
                                {item.icon}
                                <span className="ml-1">{item.label}</span>
                            </li>
                        ))}
                    </ul>
                    <div className="h-[3px] bg-[#2f8ac4]" />
                </div>
                <div className="h-[17px] mt-auto pl-[13px] bg-[#f0f0f0] flex items-center shrink-0">
                    <div className="w-[135px] h-0.5 bg-[#8a8a8a]" />
                </div>
                <div className="flex justify-center h-[3px] mt-0.5 border-y border-[#8a8a8a] shrink-0">
                    <span className="w-2 h-[1px] bg-[#ccc]" />
                </div>
            </div>
        </aside>
    );
}

/* ---------- graphics area ---------- */

interface ViewTool {
    label: string;
    menu?: boolean;
    icon: React.ReactNode;
}

const VIEW_TOOLS: ViewTool[] = [
    {
        label: 'Zoom to fit',
        icon: <Icon><path d="M1.500 18.500l6-6" stroke="#4a86a3" strokeWidth="3.400" /><circle cx="12" cy="7.500" r="6.500" fill="#e3e8ed" stroke="#777" strokeWidth="1.200" /><path d="M12 3l1.500 2h-3zM12 12l1.500-2h-3zM7.500 7.500l2-1.500v3zM16.500 7.500l-2-1.500v3z" fill="#222" /></Icon>,
    },
    {
        label: 'Zoom to area',
        icon: <Icon><path d="M7 1.500h11.500V14H7z" stroke="#444" strokeDasharray="2.500 1.500" /><path d="M1.500 18.500l5-5" stroke="#4a86a3" strokeWidth="3.400" /><circle cx="11.500" cy="8.500" r="6" fill="#cfd9e3" stroke="#7e8a94" strokeWidth="1.300" /></Icon>,
    },
    {
        label: 'Previous view',
        icon: <Icon><path d="M2 14L13 4l5-2.500 1 1.500-3 5L6 18z" fill="#dcdcdc" stroke="#666" /><path d="M11 5l4 4M7 9l4 4" stroke="#888" /><path d="M19 13.500h-4V11l-5 4 5 4v-2.500h4z" fill="#3b82aa" /></Icon>,
    },
    {
        label: 'Section view',
        icon: <Icon><path d="M1.500 5C4 1 16 1 18.500 5v11l-5 1.500V9h-6v9.500l-6-2z" fill="#c9ccd1" stroke="#666" strokeWidth=".9" /><path d="M1.500 6l6 1.500v11l-6-2zM13.500 7.500l5-1.500v10l-5 1.500z" fill="#8fc3da" stroke="#1e5f80" strokeWidth=".9" /><path d="M2 11l5-4M2 15l5-5M14 12l4-4M14 16l4-5" stroke="#1d4a61" /></Icon>,
    },
    {
        label: 'View orientation',
        menu: true,
        icon: <Icon><path d="M6 6V1.500h12.500V14H14M6 6h8M10 1.500V6M14 10h4.500M18.500 1.500L14 6M6 1.500L1.500 6M12 4h6v9" stroke="#444" /><path d="M1.500 6.500H14v12H1.500z" fill="#6aa8c6" stroke="#1e5068" /></Icon>,
    },
    {
        label: 'Display style',
        menu: true,
        icon: <Icon><path d="M2 4l7-2.500 9 2V16l-8 3-8-3z" fill="#e5e8eb" stroke="#555" /><path d="M2 4l4 1.300v12L2 16zM6 5.300L10 6.500v12.500l-4-1.700z" fill="#4e98bb" /><path d="M10 6.500L14 5v12.500L10 19z" fill="#bcdff0" /><path d="M2 4l8 2.500 8-3M10 6.500V19" stroke="#444" /></Icon>,
    },
    {
        label: 'Hide/show items',
        menu: true,
        icon: <Icon><path d="M.5 10.500C5 3.500 15 3.500 19.500 10.500 15 16.500 5 16.500.5 10.500z" fill="#efefef" stroke="#858585" strokeWidth="1.200" /><circle cx="10" cy="10" r="4.200" fill="#707070" /><circle cx="10" cy="10" r="1.800" fill="#222" /><path d="M10 2.500v16" stroke="#444" /></Icon>,
    },
    {
        label: 'Edit appearance',
        icon: <Icon><circle cx="9" cy="8.500" r="7.500" fill="#cc3b3b" /><path d="M9 1a7.500 7.500 0 0 0-7.300 9L9 8.500z" fill="#4a76cf" /><path d="M1.700 10A7.500 7.500 0 0 0 9 16V8.500z" fill="#3f9a4a" /><ellipse cx="7" cy="5" rx="2.500" ry="2" fill="#fff" opacity=".5" /><path d="M7 19l1.500-4.500L16 7l3 3-7.500 7.500z" fill="#edd171" stroke="#555" strokeWidth=".9" /></Icon>,
    },
    {
        label: 'Apply scene',
        menu: true,
        icon: <Icon><path d="M.5 8.500h19v11H.5z" fill="#444" /><path d="M2 15.500h3v3H2zM8.500 16h3v3h-3zM15 15.500h3v3h-3zM15 10h3v3h-3zM2 10h3v3H2z" fill="#eee" /><circle cx="10" cy="8.500" r="7.500" fill="#cc3b3b" /><path d="M10 1a7.500 7.500 0 0 0-7.300 9L10 8.500z" fill="#4a76cf" /><path d="M2.700 10A7.500 7.500 0 0 0 10 16V8.500z" fill="#3f9a4a" /><path d="M10 16a7.500 7.500 0 0 0 7.300-6.500L10 8.500z" fill="#e6cc4f" /><ellipse cx="8" cy="5" rx="2.500" ry="2" fill="#fff" opacity=".5" /></Icon>,
    },
    {
        label: 'View settings',
        menu: true,
        icon: <Icon><path d="M1.500 3h17v11h-17z" fill="#d4d4d4" stroke="#555" strokeWidth="1.300" /><path d="M10 14v3M6 17.500h8" stroke="#222" strokeWidth="2" /></Icon>,
    },
];

const TASK_PANE = [
    { label: 'Resources', icon: house },
    {
        label: 'Design Library',
        icon: <Icon><path d="M2 5l4-3 3 1 3-1.500 3 1L18 2v13l-6 4-3-1-3 .5-4-2z" fill="#f2f2f2" stroke="#333" strokeWidth=".7" /><path d="M2 5l4 1v12M6 6l3-3M9 6v12M9 6l3-3M12.500 6v13M12.500 6L16 3" stroke="#333" /></Icon>,
    },
    {
        label: 'File Explorer',
        icon: <Icon><path d="M1 3h7l2 2.500h8V9H6L2 17z" fill="#b5b5b5" /><path d="M1.500 18L6 8.500h14L16 18z" fill="#fafafa" /></Icon>,
    },
    {
        label: 'View Palette',
        icon: <Icon><rect x="1" y="1" width="18" height="18" rx="2" fill="#eee" stroke="#777" /><path d="M3 4h8v3H3zM14 4h3v3h-3zM6 10h3v3h3v3H3v-3h3z" fill="#f5c518" stroke="#222" strokeWidth="1" /><path d="M14 11h4v7h-4z" fill="#999" /></Icon>,
    },
    { label: 'Appearances', icon: ball },
    { label: 'Custom Properties', icon: listPanel },
];

function Model() {
    return (
        <svg viewBox="0 0 1686 859" className="w-full h-full" role="img" aria-label="Part model">
            <defs>
                <linearGradient id="face" gradientUnits="userSpaceOnUse" x1="230" y1="140" x2="345" y2="290">
                    <stop offset="0" stopColor="#fcdf9d" />
                    <stop offset=".3" stopColor="#ffe9a2" />
                    <stop offset=".65" stopColor="#fff9aa" />
                    <stop offset="1" stopColor="#ffffae" />
                </linearGradient>
                <linearGradient id="side" gradientUnits="userSpaceOnUse" x1="120" y1="430" x2="640" y2="110">
                    <stop offset="0" stopColor="#968959" />
                    <stop offset=".5" stopColor="#ae9f6a" />
                    <stop offset="1" stopColor="#c5b27a" />
                </linearGradient>
                <linearGradient id="leftEnd" gradientUnits="userSpaceOnUse" x1="20" y1="430" x2="135" y2="400">
                    <stop offset="0" stopColor="#554c32" />
                    <stop offset=".25" stopColor="#625838" />
                    <stop offset=".6" stopColor="#82764d" />
                    <stop offset="1" stopColor="#968959" />
                </linearGradient>
                <linearGradient id="cone" gradientUnits="userSpaceOnUse" x1="270" y1="465" x2="350" y2="330">
                    <stop offset="0" stopColor="#4d452e" />
                    <stop offset=".3" stopColor="#6a6040" />
                    <stop offset=".7" stopColor="#82774f" />
                    <stop offset="1" stopColor="#8d8158" />
                </linearGradient>
                <radialGradient id="coneGlow" gradientUnits="userSpaceOnUse" cx="475" cy="385" r="110">
                    <stop offset="0" stopColor="#9e9161" />
                    <stop offset=".5" stopColor="#928559" stopOpacity=".7" />
                    <stop offset="1" stopColor="#8d8158" stopOpacity="0" />
                </radialGradient>
                <linearGradient id="base" gradientUnits="userSpaceOnUse" x1="285" y1="485" x2="520" y2="390">
                    <stop offset="0" stopColor="#554c32" />
                    <stop offset=".25" stopColor="#82764d" />
                    <stop offset=".7" stopColor="#ae9f6a" />
                    <stop offset="1" stopColor="#bba972" />
                </linearGradient>
                <clipPath id="neckClip">
                    <path d="M108 468C170 467 210 457 282 454C325 453 336 457 341 461L347 466C380 464 418 452 453 430C487 407 510 378 512 360L516 347C523 316 545 283 572 233L628 154L400 300Z" />
                </clipPath>
                <filter id="soften" x="-50%" y="-50%" width="200%" height="200%">
                    <feGaussianBlur stdDeviation="12" />
                </filter>
            </defs>

            <g transform="translate(495 132)" strokeLinejoin="round" stroke="#000" strokeWidth="1.200" fill="none">
                {/* Foot */}
                <path d="M279 454C283 470 290 477 299 484C313 496 330 500 350 500C383 500 412 490 434 479C470 459 494 438 507 420C522 398 524 386 520 370L514 350L340 440Z" fill="#00008c" />
                <path d="M279 454C283 470 290 476 300 483C313 493 330 496.500 350 496.500C383 496 410 487 432 475C467 456 491 434 505 416C521 395 524 384 520 370L514 350L340 440Z" fill="url(#base)" />

                {/* Lofted neck */}
                <path d="M282 454C325 453 336 457 338 462L345 469.500C380 468 419 455 454 432.500C489 409 512 380 512 360L400 380Z" fill="#000070" />
                <path d="M108 468C170 467 210 457 282 454C325 453 336 457 341 461L347 466C380 464 418 452 453 430C487 407 510 378 512 360L516 347C523 316 545 283 572 233L628 154L400 300Z" fill="url(#cone)" />
                <g clipPath="url(#neckClip)" stroke="none">
                    <circle cx="475" cy="385" r="110" fill="url(#coneGlow)" />
                    <path d="M645 130L575 235C555 275 538 300 529 335" stroke="#3f3925" strokeWidth="40" filter="url(#soften)" />
                </g>
                <path d="M512 360L516 347C523 316 545 283 572 233L628 154" />

                {/* Rim sides */}
                <path d="M17 385L38 447C44 464 65 470 87 469C110 469 128 463 142 457L114 388Z" fill="url(#leftEnd)" />
                <path d="M114 388L142 457C310 385 500 270 628 154L599 86Z" fill="url(#side)" />
                <path d="M599 86L628 154C643 138 650 124 650 113C650 105 648 101 646 97L618 42Z" fill="#c7b57d" />

                {/* Filleted edge */}
                <path d="M36 321C20 340 13 353 13 367C13 391 34 402 63 402C83 402 100 396 115 389C300 300 470 190 598 87C613 74 619 63 619 50C619 28 595 15 564 15C548 15 532 18 514 24C340 82 150 198 36 321Z" fill="#0000f5" />
                <path d="M113 384.500C300 294 470 183 594 83" stroke="#2020ff" strokeWidth="3" />
                <path d="M111 379C298 287 465 178 590 79C603 67 608 58 608 46C607 27 590 17 564 17C548 17 532 20 514 25C340 83 150 200 37 323C25 338 20 350 20 360C20 380 38 390 62 390C82 390 98 385 111 379Z" fill="url(#face)" />
                <path d="M111 379L115 389M590 79L599 87" />
            </g>

            {/* Orientation triad */}
            <g strokeWidth="4" fill="none">
                <path d="M40 800l-6-15" stroke="#176a1a" />
                <path d="M30 778l9 6-7 4z" fill="#2d962f" stroke="#176a1a" strokeWidth="1" />
                <path d="M40 800l16-10" stroke="#d11b1b" />
                <path d="M64 785l-9 9-4-7z" fill="#a01818" stroke="#7c1010" strokeWidth="1" />
                <path d="M40 800l8 6" stroke="#14148a" />
                <circle cx="50" cy="808" r="4" fill="#1818c8" />
            </g>
            <g className="text-[11px]" fontFamily="Liberation Sans, sans-serif">
                <text x="26" y="777" fill="#0a8a0a">Y</text>
                <text x="64" y="787" fill="#f00000">X</text>
                <text x="51" y="816" fill="#0000f0">Z</text>
            </g>
        </svg>
    );
}

function GraphicsArea() {
    return (
        <main className="relative flex-1 min-w-0 bg-[#c4c8d3]">
            <div className="absolute inset-0"><Model /></div>
            <div className="absolute inset-x-0 top-[5px] pr-[2px] flex items-center justify-center gap-[6px]">
                {VIEW_TOOLS.map(t => (
                    <React.Fragment key={t.label}>
                        <button aria-label={t.label}>{t.icon}</button>
                        {t.menu && (
                            <button aria-label={`${t.label} options`} className="flex justify-center w-2"><Caret className="text-[#8b8e96]" /></button>
                        )}
                    </React.Fragment>
                ))}
            </div>
            <button aria-label="Collapse panel" className="absolute -left-px top-[399px] flex items-center w-[9px] h-[39px] bg-[#4a4a4a] border border-l-0 border-[#8a8a8a]">
                <span className="w-2 h-2 rounded-full bg-[#cfcfcf] border border-[#8a8a8a]" />
            </button>
            <div className="absolute right-0 top-[28px] flex flex-col w-[22px] border-l border-t border-[#8a8a8a]">
                {TASK_PANE.map(t => (
                    <button
                        key={t.label}
                        aria-label={t.label}
                        className={`flex items-center h-6 pl-[1px] overflow-hidden border-b border-[#8a8a8a] ${t.label === 'Appearances' ? 'bg-[#b3b3b3]' : 'bg-[#333]'}`}
                    >
                        {t.icon}
                    </button>
                ))}
            </div>
        </main>
    );
}

/* ---------- bottom ---------- */

const NAV = [
    { label: 'First', d: 'M4 3v8M11 3L6 7l5 4z' },
    { label: 'Previous', d: 'M10 3L5 7l5 4z' },
    { label: 'Next', d: 'M5 3l5 4-5 4z' },
    { label: 'Last', d: 'M4 3l5 4-5 4zM11 3v8' },
];

function BottomBar() {
    return (
        <footer className="shrink-0">
            <div className="flex h-[15px] border-t border-[#8a8a8a] text-[11px] leading-3 overflow-hidden">
                <div className="flex w-[62px] bg-[#b0b0b0] shrink-0">
                    {NAV.map(n => (
                        <button key={n.label} aria-label={n.label} className="flex-1 flex justify-center border-r border-b border-[#d0d0d0] bg-[#a6a6a6]">
                            <svg viewBox="0 0 14 14" className="w-[14px] h-[14px]" aria-hidden="true"><path d={n.d} fill="#8a8d90" stroke="#8a8d90" /></svg>
                        </button>
                    ))}
                </div>
                <button className="w-[57px] pl-1 border-r border-[#8a8a8a] font-bold">Model</button>
                <button className="w-[108px] bg-[#333] border-r border-[#8a8a8a] whitespace-nowrap pr-2">Motion Study 1</button>
            </div>
            <div className="flex h-[10px] bg-[#949494] border-t border-[#858585] text-[11px] leading-4 text-[#e4e4e4] overflow-hidden whitespace-nowrap">
                <span className="flex-1">SOLIDWORKS 2022 SP5.0</span>
                <span className="w-[95px]">Editing Part</span>
                <span className="w-[85px]">
                    <Icon className="w-[14px] h-[14px]"><path d="M8 1L0 18h16z" fill="#f5c518" stroke="#a03010" strokeWidth="1.500" /><path d="M8 6v6" stroke="#111" strokeWidth="2" /><path d="M16 12V3M12 6l4-5 4 5z" stroke="#111" strokeWidth="2.500" /></Icon>
                </span>
                <span className="w-[56px]">MMGS</span>
                <span className="w-[30px]">-</span>
                <span className="w-[15px] pt-[1px]">
                    <Icon className="w-4 h-4"><path d="M1 5l8-3 10 4v10L9 18 1 12z" fill="#444" stroke="#eee" strokeWidth="1.500" /><path d="M5 6l6 3v5" stroke="#eee" strokeWidth="1.500" /></Icon>
                </span>
            </div>
        </footer>
    );
}

export default function App() {
    return (
        <div className="flex flex-col h-screen overflow-hidden bg-[#4a4a4a] text-[#f4f4f4] font-['Noto_Sans',sans-serif]">
            <TitleBar />
            <Ribbon />
            <CommandTabs />
            <div className="flex flex-1 min-h-0">
                <FeatureManager />
                <GraphicsArea />
            </div>
            <BottomBar />
        </div>
    );
}
